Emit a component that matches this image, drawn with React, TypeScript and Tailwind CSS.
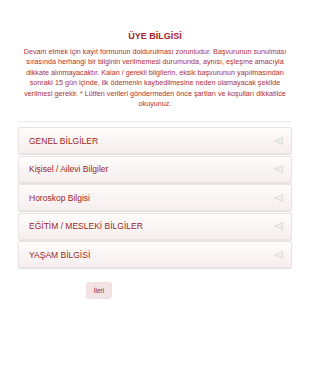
import React from "react";

const items = [
  "GENEL BİLGİLER",
  "Kişisel / Ailevi Bilgiler",
  "Horoskop Bilgisi",
  "EĞİTİM / MESLEKİ BİLGİLER",
  "YAŞAM BİLGİSİ",
];

function Tri() {
  return (
    <svg width="9" height="8" viewBox="0 0 9 8" className="shrink-0">
      <polygon points="8.5,0.5 8.5,7.5 0.7,4" fill="#efefef" stroke="#d6d6d6" strokeWidth="0.8" />
    </svg>
  );
}

export default function App() {
  return (
    <div className="w-[310px] h-[381px] bg-white" style={{ fontFamily: '"Liberation Sans", Arial, sans-serif' }}>
      <div className="pt-[31px] flex flex-col items-center">
        <div className="text-[9px] leading-[11px] font-bold text-[#a8242a]">ÜYE BİLGİSİ</div>
        <p className="mt-[5px] w-[272px] text-center text-[7.2px] leading-[10.4px] text-[#ad2f36]">
          Devam etmek için kayıt formunun doldurulması zorunludur. Başvurunun sunulması sırasında herhangi bir bilginin verilmemesi durumunda, aynısı, eşleşme amacıyla dikkate alınmayacaktır. Kalan / gerekli bilgilerin, eksik başvurunun yapılmasından sonraki 15 gün içinde, ilk ödemenin kaybedilmesine neden olamayacak şekilde verilmesi gerekir. * Lütfen verileri göndermeden önce şartları ve koşulları dikkatlice okuyunuz.
        </p>
      </div>
      <div className="mx-[18px] mt-[12px] border-t border-[#f0ecec]" />
      <div className="mx-[18px] mt-[5px] flex flex-col gap-[1.5px]">
        {items.map((t) => (
          <div
            key={t}
            className="h-[27px] flex items-center justify-between pl-[10px] pr-[8px] rounded-[2px] border border-[#ebe3e3] bg-gradient-to-b from-[#fefcfc] to-[#f6eeee] shadow-[0_1px_1px_rgba(0,0,0,0.12)]"
          >
            <span className="text-[8.5px] text-[#9a1f24]">{t}</span>
            <Tri />
          </div>
        ))}
      </div>
      <div className="mt-[14px] pl-[86px]">
        <button className="w-[26px] h-[17px] rounded-[3px] bg-[#f3e3e4] border border-[#f0dfe0] text-[6.5px] text-[#9e2226] flex items-center justify-center">
          İleri
        </button>
      </div>
    </div>
  );
}
